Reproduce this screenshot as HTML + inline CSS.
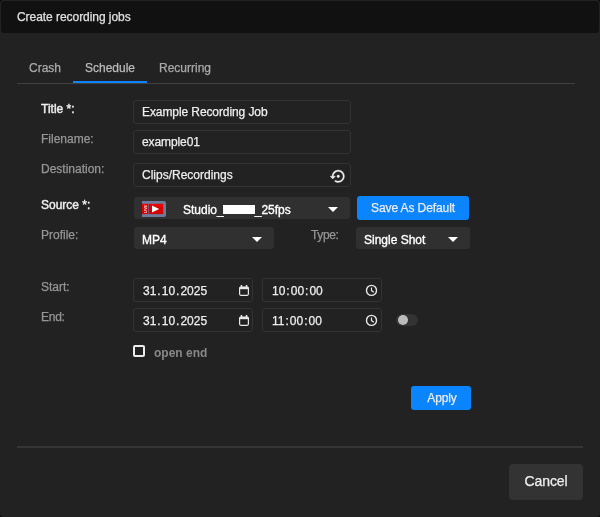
<!DOCTYPE html>
<html><head><meta charset="utf-8">
<style>
html,body{margin:0;padding:0;background:#000;}
body{width:600px;height:517px;overflow:hidden;font-family:"Liberation Sans",sans-serif;font-size:12px;color:#ddd;-webkit-text-stroke:0.25px currentColor;}
#dlg{will-change:transform;position:absolute;left:0;top:0;width:600px;height:517px;background:#222;border-radius:3px;overflow:hidden;}
#hdr{position:absolute;left:1px;top:1px;width:598px;height:32px;background:#111;border-radius:3px;}
#hdr span{position:absolute;left:16px;top:9px;font-size:12px;color:#e0e0e0;letter-spacing:-0.050px;}
.abs{position:absolute;white-space:nowrap;}
.tab{position:absolute;top:61px;font-size:12px;color:#aaa;}
.lbl{position:absolute;left:41px;font-size:12px;color:#969696;}
.lbl.w{color:#f0f0f0;-webkit-text-stroke:0.400px currentColor;}
.inp{position:absolute;box-sizing:border-box;border:1px solid #333;border-radius:3px;background:#222;color:#eee;font-size:12px;padding-left:8px;line-height:22px;height:24px;}
.sel{position:absolute;box-sizing:border-box;border-radius:3px;background:#303030;color:#fff;font-size:12px;padding-left:8px;line-height:22px;height:22px;padding-top:2px;-webkit-text-stroke:0.350px currentColor;}
.btn{position:absolute;box-sizing:border-box;border-radius:3px;background:#0a84ff;color:#ececec;letter-spacing:-0.1px;font-size:12px;text-align:center;}
.f{padding:0 1px;}
.dt{padding-top:2px;line-height:20px;}
.arrow{position:absolute;width:0;height:0;border-left:5px solid transparent;border-right:5px solid transparent;border-top:5px solid #fff;}
</style></head><body>
<div id="dlg">
<div id="hdr"><span>Create recording jobs</span></div>

<div class="tab" style="left:29px">Crash</div>
<div class="tab" style="left:85px;color:#bbb">Schedule</div>
<div class="tab" style="left:159px">Recurring</div>
<div class="abs" style="left:17px;top:83px;width:558px;height:1px;background:#404040"></div>
<div class="abs" style="left:73px;top:81px;width:74px;height:2px;background:#0a84ff"></div>

<div class="lbl w" style="top:102px">Title *:</div>
<div class="inp" style="left:133px;top:100px;width:218px;letter-spacing:-0.090px">Example Recording Job</div>
<div class="lbl" style="top:132px">Filename:</div>
<div class="inp" style="left:133px;top:130px;width:218px;letter-spacing:-0.100px">example01</div>
<div class="lbl" style="top:162px">Destination:</div>
<div class="inp" style="left:133px;top:163px;width:218px">Clips/Recordings</div>
<svg class="abs" style="left:329.700px;top:167.600px" width="16.500" height="16.500" viewBox="0 0 24 24"><path fill="#eee" stroke="#eee" stroke-width="0.500" d="M14 12c0-1.100-.9-2-2-2s-2 .9-2 2 .9 2 2 2 2-.9 2-2zm-2-9c-4.970 0-9 4.030-9 9H0l4 4 4-4H5c0-3.870 3.130-7 7-7s7 3.130 7 7-3.130 7-7 7c-1.510 0-2.910-.49-4.060-1.300l-1.420 1.440C8.040 20.300 9.940 21 12 21c4.970 0 9-4.030 9-9s-4.030-9-9-9z"/></svg>

<div class="lbl w" style="top:198px">Source *:</div>
<div class="sel" style="left:134px;top:197px;width:216px;padding-left:49px">Studio_<span style="display:inline-block;width:32px;height:9px;background:#fff;vertical-align:0;margin-left:-1px"></span>_25fps</div>
<svg class="abs" style="left:142px;top:201px" width="24" height="16" viewBox="0 0 24 16"><defs><linearGradient id="rg" x1="0" y1="0" x2="0" y2="1"><stop offset="0" stop-color="#ea0000"/><stop offset="1" stop-color="#cc0000"/></linearGradient></defs><path d="M0 0H22a2 2 0 0 1 2 2V14a2 2 0 0 1-2 2H0Z" fill="#6e7b9c"/><rect x="0" y="2.800" width="21.200" height="10.300" fill="url(#rg)"/><rect x="6" y="2.800" width="1" height="10.300" fill="#8a5070"/><path d="M10 4.500 L17.200 8 L10 11.500Z" fill="#fff"/><text x="0" y="0" font-size="3.600" font-family="Liberation Sans, sans-serif" font-weight="bold" fill="#fff" fill-opacity="0.900" style="-webkit-text-stroke:0" transform="translate(4.600,12) rotate(-90)">LIVE</text></svg>
<div class="arrow" style="left:328px;top:207px"></div>
<div class="btn" style="left:357px;top:196px;width:112px;height:24px;line-height:24px">Save As Default</div>

<div class="lbl" style="top:228px">Profile:</div>
<div class="sel" style="left:134px;top:227px;width:140px;">MP4</div>
<div class="arrow" style="left:252px;top:237px"></div>
<div class="lbl" style="top:228px;left:311px;letter-spacing:-0.350px">Type:</div>
<div class="sel" style="left:356px;top:227px;width:114px;">Single Shot</div>
<div class="arrow" style="left:448px;top:237px"></div>

<div class="lbl" style="top:280px">Start:</div>
<div class="inp dt" style="left:133px;top:278px;width:120px"><span class="f">31</span>.<span class="f">10</span>.<span class="f">2025</span></div>
<svg class="abs" style="left:238px;top:284px" width="12" height="12" viewBox="0 0 12 12"><rect x="1.600" y="3.100" width="8.800" height="8.200" rx="1.200" fill="none" stroke="#e8e8e8" stroke-width="1.200"/><rect x="1.600" y="3" width="8.800" height="2.200" fill="#e8e8e8"/><rect x="2.700" y="1" width="1.500" height="2.200" fill="#e8e8e8"/><rect x="7.800" y="1" width="1.500" height="2.200" fill="#e8e8e8"/></svg>
<div class="inp dt" style="left:262px;top:278px;width:120px"><span class="f">10</span>:<span class="f">00</span>:<span class="f">00</span></div>
<svg class="abs" style="left:365px;top:284px" width="13" height="13" viewBox="0 0 13 13"><circle cx="6.500" cy="6.400" r="5" fill="none" stroke="#e8e8e8" stroke-width="1.400"/><path d="M6.500 3.500V6.600L8.800 8.200" fill="none" stroke="#e8e8e8" stroke-width="1.200"/></svg>
<div class="lbl" style="top:310px;letter-spacing:-0.250px">End:</div>
<div class="inp dt" style="left:133px;top:308px;width:120px"><span class="f">31</span>.<span class="f">10</span>.<span class="f">2025</span></div>
<svg class="abs" style="left:238px;top:314px" width="12" height="12" viewBox="0 0 12 12"><rect x="1.600" y="3.100" width="8.800" height="8.200" rx="1.200" fill="none" stroke="#e8e8e8" stroke-width="1.200"/><rect x="1.600" y="3" width="8.800" height="2.200" fill="#e8e8e8"/><rect x="2.700" y="1" width="1.500" height="2.200" fill="#e8e8e8"/><rect x="7.800" y="1" width="1.500" height="2.200" fill="#e8e8e8"/></svg>
<div class="inp dt" style="left:262px;top:308px;width:120px"><span class="f">11</span>:<span class="f">00</span>:<span class="f">00</span></div>
<svg class="abs" style="left:365px;top:314px" width="13" height="13" viewBox="0 0 13 13"><circle cx="6.500" cy="6.400" r="5" fill="none" stroke="#e8e8e8" stroke-width="1.400"/><path d="M6.500 3.500V6.600L8.800 8.200" fill="none" stroke="#e8e8e8" stroke-width="1.200"/></svg>

<div class="abs" style="left:396px;top:314px;width:22px;height:12px;border-radius:6px;background:#333"></div>
<div class="abs" style="left:398px;top:315px;width:10px;height:10px;border-radius:5px;background:#bbb"></div>

<div class="abs" style="left:133px;top:345px;width:8px;height:8px;border:2px solid #eee;border-radius:2px"></div>
<div class="abs" style="left:154px;top:346px;color:#888;font-weight:bold;font-size:12px;-webkit-text-stroke:0">open end</div>

<div class="btn" style="left:411px;top:386px;width:60px;height:24px;line-height:24px;padding-left:2px">Apply</div>

<div class="abs" style="left:17px;top:446px;width:566px;height:2px;background:#353535"></div>
<div class="btn" style="left:509px;top:464px;width:74px;height:36px;line-height:34px;background:#333;color:#eee;font-size:14px;border-radius:4px">Cancel</div>
</div>
</body></html>
